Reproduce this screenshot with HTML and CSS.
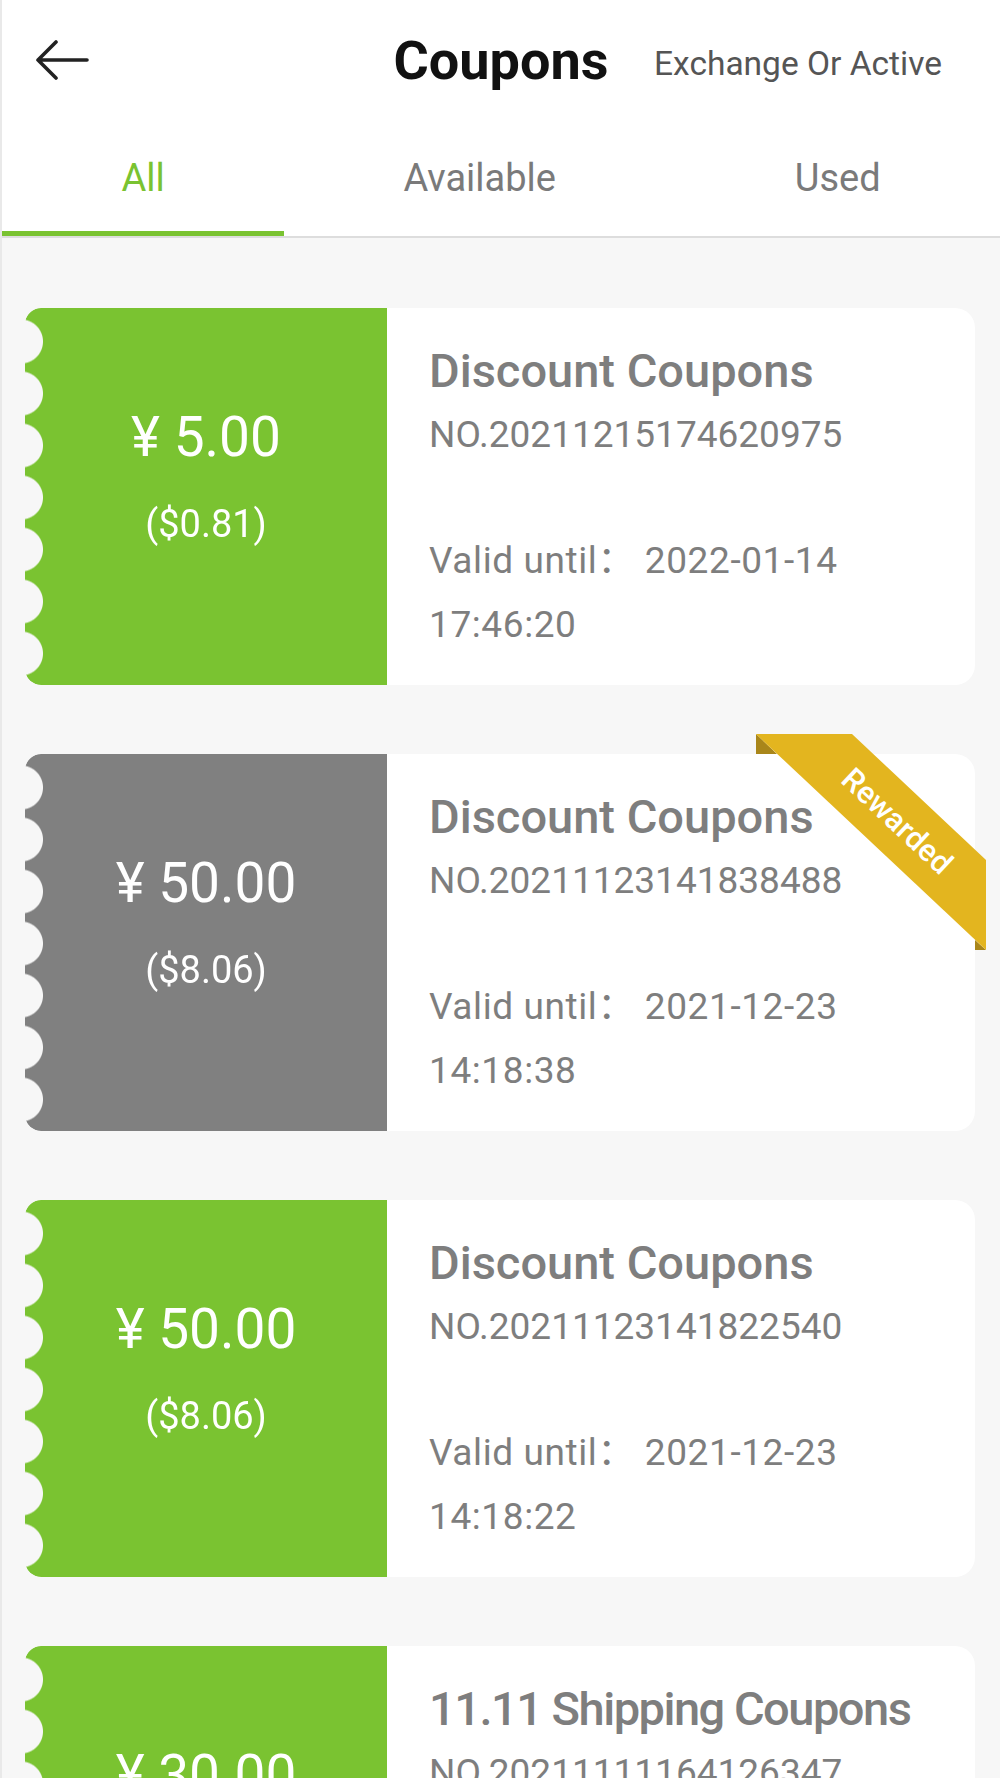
FILE: index.html
```html
<!DOCTYPE html>
<html lang="en">
  <head>
    <meta charset="UTF-8" />
    <meta name="viewport" content="width=device-width, initial-scale=1.0" />
    <title>Coupons</title>
    <link rel="stylesheet" href="styles.css">
  </head>
  <body>
    <div class="page">
      <header class="topbar">
        <div class="titleRow">
          <a class="back" href="#" aria-label="Back">
            <svg width="56" height="40" viewBox="0 0 56 40">
              <path d="M3 20H52M21 2L3 20L21 38" fill="none" stroke="#222" stroke-width="3.6" stroke-linecap="round" stroke-linejoin="round" />
            </svg>
          </a>
          <h1>Coupons</h1>
          <a class="exchange" href="#">Exchange Or Active</a>
        </div>
        <nav class="tabs">
          <a class="tab active" href="#">All</a>
          <a class="tab" href="#">Available</a>
          <a class="tab" href="#">Used</a>
        </nav>
      </header>

      <main class="list">
        <div class="coupon">
          <div class="amount">
            <p class="price">¥ 5.00</p>
            <p class="usd">($0.81)</p>
          </div>
          <div class="info">
            <h2>Discount Coupons</h2>
            <p class="number">NO.20211215174620975</p>
            <p class="valid">Valid until： 2022-01-14 17:46:20</p>
          </div>
        </div>

        <div class="coupon">
          <div class="amount used">
            <p class="price">¥ 50.00</p>
            <p class="usd">($8.06)</p>
          </div>
          <div class="info">
            <h2>Discount Coupons</h2>
            <p class="number">NO.20211123141838488</p>
            <p class="valid">Valid until： 2021-12-23 14:18:38</p>
          </div>
          <svg class="ribbon" width="230" height="216" viewBox="0 0 230 216">
            <polygon points="0,0 0,20 21,20" fill="#a9861a" />
            <polygon points="219,206 219,216 230,216" fill="#a9861a" />
            <polygon points="0,0 96,0 230,126 230,216" fill="#e3b51f" />
            <text x="141" y="87" transform="rotate(43.2 141 87)" text-anchor="middle" dominant-baseline="central">Rewarded</text>
          </svg>
        </div>

        <div class="coupon">
          <div class="amount">
            <p class="price">¥ 50.00</p>
            <p class="usd">($8.06)</p>
          </div>
          <div class="info">
            <h2>Discount Coupons</h2>
            <p class="number">NO.20211123141822540</p>
            <p class="valid">Valid until： 2021-12-23 14:18:22</p>
          </div>
        </div>

        <div class="coupon">
          <div class="amount">
            <p class="price">¥ 30.00</p>
            <p class="usd">($4.84)</p>
          </div>
          <div class="info">
            <h2 class="narrow">11.11 Shipping Coupons</h2>
            <p class="number">NO.20211111164126347</p>
            <p class="valid">Valid until： 2021-12-11 16:41:26</p>
          </div>
        </div>
      </main>
    </div>
  </body>
</html>
```

FILE: styles.css
```css
html {
  font-family: Roboto, "Noto Sans CJK SC", sans-serif;
}

body {
  margin: 0;
  overflow: hidden;
  background-color: #f7f7f7;
}

a {
  text-decoration: none;
}

.page {
  height: 100vh;
  overflow: hidden;
  border-left: 2px solid #e9e9e9;
  background-color: #f7f7f7;
}

.topbar {
  background-color: #fff;
}

.titleRow {
  display: grid;
  grid-template-columns: 1fr auto 1fr;
  align-items: center;
  height: 120px;
}

.back {
  display: flex;
  margin-left: 33px;
  justify-self: start;
}

h1 {
  margin: 0;
  font-size: 54px;
  font-weight: 700;
  color: #111;
}

.exchange {
  justify-self: end;
  margin: 6px 58px 0 0;
  font-size: 33.5px;
  color: #555;
}

.tabs {
  display: flex;
  height: 116px;
  border-bottom: 2px solid #dddddd;
}

.tab {
  flex: 1 1 auto;
  display: flex;
  align-items: center;
  justify-content: center;
  font-size: 38px;
  color: #7a7a7a;
}

.tab.active {
  color: #7ac331;
  box-shadow: inset 0 -5px 0 #7ac331;
}

.list {
  display: flex;
  flex-direction: column;
  gap: 69px;
  padding: 70px 25px 0 23px;
}

.coupon {
  position: relative;
  display: flex;
  height: 377px;
  flex-shrink: 0;
}

/* green stub with the scalloped left edge */
.amount {
  flex: 0 0 362px;
  box-sizing: border-box;
  padding-top: 96px;
  border-radius: 16px 0 0 16px;
  background-color: #7ac331;
  color: #fff;
  text-align: center;
  -webkit-mask: radial-gradient(circle at -4px 50%, transparent 21.5px, #000 22.5px) 0 7.5px / 100% 52px repeat-y;
  mask: radial-gradient(circle at -4px 50%, transparent 21.5px, #000 22.5px) 0 7.5px / 100% 52px repeat-y;
}

.amount.used {
  background-color: #808080;
}

.price {
  margin: 0;
  font-size: 55px;
  line-height: 66px;
}

.usd {
  margin: 22px 0 0;
  font-size: 38px;
  line-height: 64px;
}

.info {
  flex: 1;
  padding: 31px 20px 0 42px;
  border-radius: 0 20px 20px 0;
  background-color: #fff;
  color: #7e7e7e;
}

h2 {
  margin: 0;
  font-size: 47px;
  font-weight: 500;
  line-height: 64px;
}

h2.narrow {
  letter-spacing: -1.5px;
}

.number {
  margin: 0;
  font-size: 37px;
  line-height: 64px;
}

.valid {
  margin: 62px 0 0;
  font-size: 37px;
  line-height: 64px;
  letter-spacing: 0.6px;
}

.ribbon {
  position: absolute;
  top: -20px;
  right: -11px;
}

.ribbon text {
  font-family: Roboto, sans-serif;
  font-size: 31px;
  font-weight: 500;
  fill: #fff;
}
```
